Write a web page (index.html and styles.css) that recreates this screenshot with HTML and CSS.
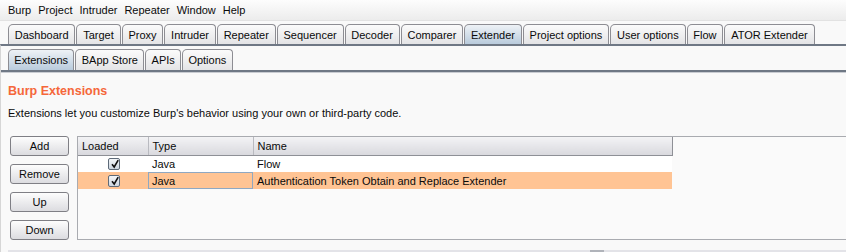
FILE: index.html
```html
<!DOCTYPE html>
<html>
<head>
<meta charset="utf-8">
<link rel="stylesheet" href="styles.css">
</head>
<body>
<div class="menubar">
  <span class="menu">Burp</span><span class="menu">Project</span><span class="menu">Intruder</span><span class="menu">Repeater</span><span class="menu">Window</span><span class="menu">Help</span>
</div>
<div class="tabrow top">
  <div class="tab">Dashboard</div>
  <div class="tab">Target</div>
  <div class="tab">Proxy</div>
  <div class="tab">Intruder</div>
  <div class="tab">Repeater</div>
  <div class="tab">Sequencer</div>
  <div class="tab">Decoder</div>
  <div class="tab">Comparer</div>
  <div class="tab sel">Extender</div>
  <div class="tab">Project options</div>
  <div class="tab">User options</div>
  <div class="tab">Flow</div>
  <div class="tab">ATOR Extender</div>
</div>
<div class="mainpane">
  <div class="tabrow sub">
    <div class="tab sel">Extensions</div>
    <div class="tab">BApp Store</div>
    <div class="tab">APIs</div>
    <div class="tab">Options</div>
  </div>
  <div class="subpane">
    <h1 class="title">Burp Extensions</h1>
    <p class="desc">Extensions let you customize Burp's behavior using your own or third-party code.</p>
    <div class="extarea">
      <div class="buttons">
        <button class="btn">Add</button>
        <button class="btn">Remove</button>
        <button class="btn">Up</button>
        <button class="btn">Down</button>
      </div>
      <div class="scroll">
        <table class="grid">
          <colgroup><col class="c1"><col class="c2"><col class="c3"></colgroup>
          <thead>
            <tr><th>Loaded</th><th>Type</th><th class="last">Name</th></tr>
          </thead>
          <tbody>
            <tr><td class="chk"><span class="cb"><svg viewBox="0 0 12 12" width="12" height="12"><path d="M3 6.2 L5.2 9 L9.2 2.2" fill="none" stroke="#111" stroke-width="1.6"/></svg></span></td><td>Java</td><td>Flow</td></tr>
            <tr class="selrow"><td class="chk"><span class="cb"><svg viewBox="0 0 12 12" width="12" height="12"><path d="M3 6.2 L5.2 9 L9.2 2.2" fill="none" stroke="#111" stroke-width="1.6"/></svg></span></td><td class="focus">Java</td><td>Authentication Token Obtain and Replace Extender</td></tr>
          </tbody>
        </table>
      </div>
    </div>
    <div class="bottombar"><span class="thumb"></span></div>
  </div>
</div>
</body>
</html>
```
FILE: styles.css
```css
* { box-sizing: border-box; }
html, body { margin: 0; padding: 0; }
body {
  width: 846px;
  height: 252px;
  overflow: hidden;
  background: #f9f9f9;
  font-family: "Liberation Sans", Arial, sans-serif;
  font-size: 11px;
  color: #0a0a0a;
}
.menubar {
  height: 21px;
  display: flex;
  align-items: center;
  padding-left: 4.5px;
  background: linear-gradient(#fdfdfd, #ececec);
  border-bottom: 1px solid #e2e2e2;
  font-size: 11px;
}
.menu { padding: 0 3.5px; }
.tabrow {
  display: flex;
  padding-left: 8px;
  align-items: flex-end;
}
.tabrow.top { margin-top: 3px; }
.tab {
  height: 20px;
  padding: 0 5.8px;
  display: flex;
  align-items: center;
  border: 1px solid #8d8d93;
  border-bottom: none;
  border-radius: 5px 4px 0 0;
  margin-right: 1px;
  background: linear-gradient(#fbfbfb, #e4e4e6);
  white-space: nowrap;
  font-size: 11px;
}
.tab.sel {
  background: linear-gradient(#eef2f6, #b9cbdc);
}
.mainpane {
  border-top: 2px solid #6f7885;
  padding-top: 3px;
  border-left: 1px solid #d6d6d6;
}
.tabrow.sub { padding-left: 7px; }
.tabrow.sub .tab { height: 21px; padding: 0 5.3px; }
.subpane {
  border-top: 2px solid #6f7885;
  box-shadow: inset 0 1px 0 #c9ccd2;
  padding: 10px 0 0 7px;
}
.title {
  margin: 0;
  font-size: 12.5px;
  font-weight: bold;
  color: #f5673a;
  height: 18px;
  line-height: 18px;
}
.desc {
  margin: 5px 0 0 0;
  height: 16px;
  line-height: 16px;
  font-size: 11px;
}
.extarea {
  display: flex;
  margin-top: 15px;
  gap: 8px;
}
.buttons {
  display: flex;
  flex-direction: column;
  gap: 8px;
  padding-left: 2px;
}
.btn {
  width: 59px;
  height: 20px;
  font-family: inherit;
  font-size: 11px;
  color: #0a0a0a;
  border: 1px solid #7f7f85;
  border-radius: 3px;
  background: linear-gradient(#fdfdfd, #dcdce0);
  padding: 0;
}
.scroll {
  flex: 1;
  height: 104px;
  border: 1px solid #a9abb0;
  border-right: none;
  background: #fafafa;
}
.grid {
  border-collapse: collapse;
  width: 594px;
  table-layout: fixed;
  font-size: 11px;
}
.c1 { width: 70px; }
.c2 { width: 105px; }
.c3 { width: 419px; }
.grid th {
  height: 18px;
  font-weight: normal;
  text-align: left;
  padding: 0 4px;
  background: linear-gradient(#f3f3f5, #d9d9de);
  border-right: 1px solid #b9bac0;
  border-bottom: 1px solid #8e9096;
}
.grid th.last { border-right: 1px solid #8e9096; }
.grid td {
  height: 17px;
  padding: 0 4px;
  background: #fff;
  white-space: nowrap;
}
.grid td.chk { text-align: center; padding: 0 0 0 2px; }
.cb {
  display: inline-block;
  width: 12px;
  height: 12px;
  border: 1px solid #5e6a78;
  border-radius: 2px;
  background: linear-gradient(#f4f6f9, #cdd6e0);
  vertical-align: middle;
  position: relative;
}
.cb svg { position: absolute; left: 0; top: -1px; }
.selrow td { background: #ffc494; }
.selrow td.focus { box-shadow: inset 0 0 0 1px #8fa8c2; }
.bottombar {
  margin-top: 10px;
  height: 8px;
  background: #e3e3e8;
  position: relative;
}
.thumb {
  position: absolute;
  left: 582px;
  top: 0;
  width: 14px;
  height: 3px;
  background: #b0b3ba;
}
```
